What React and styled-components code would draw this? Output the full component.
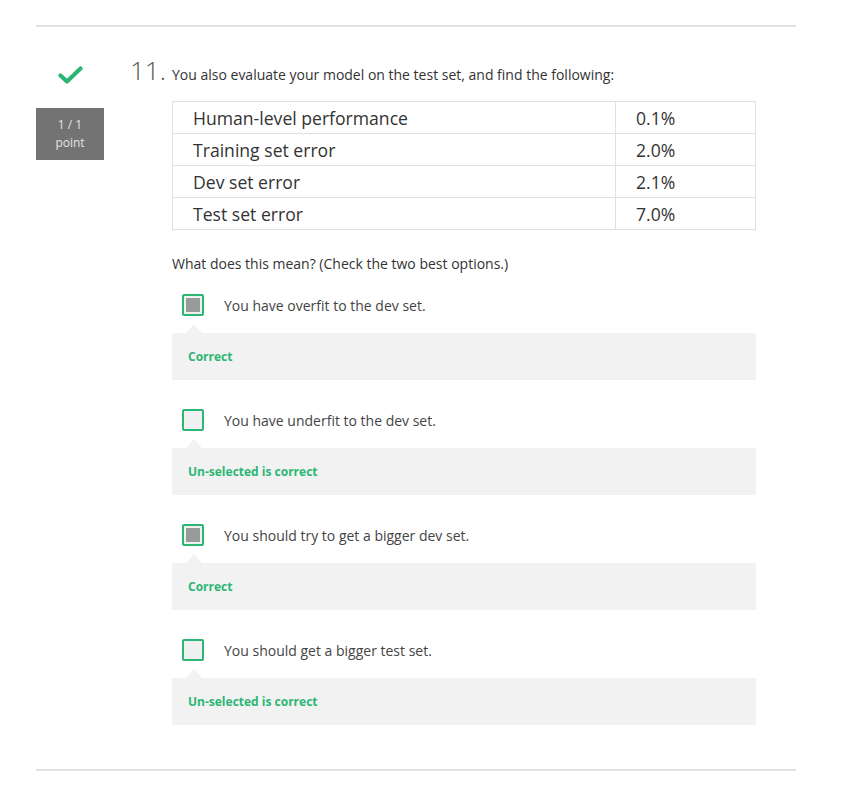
import styled, { createGlobalStyle } from "styled-components";

const GlobalStyle = createGlobalStyle`
  body {
    margin: 0;
    background: #fff;
    font-family: "Open Sans", "Liberation Sans", sans-serif;
    color: #333;
  }
`

const Page = styled.div`
  width: 760px;
  margin-left: 36px;
  padding-top: 25px;
`

const Rule = styled.hr`
  margin: 0;
  border: none;
  height: 2px;
  background: #e2e2e2;
`

const Question = styled.section`
  display: flex;
  padding: 28px 0 44px;
`

const Side = styled.div`
  width: 68px;
  display: flex;
  flex-direction: column;
  align-items: center;
`

const Check = styled.svg`
  width: 25px;
  height: 18px;
  margin-top: 11px;
  margin-bottom: 24px;
`

const PointBox = styled.div`
  width: 68px;
  height: 52px;
  background: #737373;
  color: #e4e4e4;
  font-size: 12px;
  line-height: 18px;
  text-align: center;
  padding-top: 8px;
  box-sizing: border-box;
`

const Main = styled.div`
  flex: 1;
  margin-left: 26px;
`

const Header = styled.div`
  display: flex;
  align-items: baseline;
`

const Number = styled.span`
  width: 42px;
  font-size: 26px;
  font-weight: 300;
  color: #555;
  line-height: 30px;
`

const Prompt = styled.p`
  margin: 0;
  font-size: 14px;
  color: #333;
`

const Body = styled.div`
  margin-left: 42px;
  width: 584px;
`

const Table = styled.table`
  width: 584px;
  border-collapse: collapse;
  margin-top: 16px;
`

const Cell = styled.td`
  border: 1px solid #e0e0e0;
  height: 31px;
  padding: 0 0 0 20px;
  font-size: 17.6px;
  color: #333;
  width: ${p => p.$wide ? "422px" : "auto"};
`

const Ask = styled.p`
  margin: 25px 0 0;
  font-size: 14px;
  line-height: 18px;
  color: #333;
`

const Option = styled.div`
  margin-top: ${p => p.$first ? 21 : 29}px;
`

const OptionRow = styled.div`
  display: flex;
  align-items: center;
  padding-left: 10px;
  height: 22px;
`

const Box = styled.span`
  width: 22px;
  height: 22px;
  box-sizing: border-box;
  border: 2px solid #2bb673;
  border-radius: 2px;
  background: #f0f0f0;
  display: flex;
  align-items: center;
  justify-content: center;
  margin-right: 20px;

  &::after {
    content: "";
    width: 14px;
    height: 14px;
    background: ${p => p.$checked ? "#9a9a9a" : "transparent"};
  }
`

const OptionText = styled.span`
  font-size: 14px;
  color: #444;
`

const Feedback = styled.div`
  position: relative;
  margin-top: 17px;
  height: 47px;
  background: #f2f2f2;
  padding-left: 16px;
  display: flex;
  align-items: center;
  font-size: 12px;
  font-weight: 700;
  color: #2bb673;

  &::before {
    content: "";
    position: absolute;
    left: 14px;
    top: -9px;
    border-left: 8px solid transparent;
    border-right: 8px solid transparent;
    border-bottom: 9px solid #f2f2f2;
  }
`

const rows = [
  ["Human-level performance", "0.1%"],
  ["Training set error", "2.0%"],
  ["Dev set error", "2.1%"],
  ["Test set error", "7.0%"],
]

const options = [
  { text: "You have overfit to the dev set.", checked: true, note: "Correct" },
  { text: "You have underfit to the dev set.", checked: false, note: "Un-selected is correct" },
  { text: "You should try to get a bigger dev set.", checked: true, note: "Correct" },
  { text: "You should get a bigger test set.", checked: false, note: "Un-selected is correct" },
]

export default function App() {
  return (
    <Page>
      <GlobalStyle />
      <Rule />
      <Question>
        <Side>
          <Check viewBox="0 0 25 18">
            <path d="M2.5 9.5 L9 15.5 L22.5 2.5" fill="none" stroke="#2bb673" strokeWidth="4.2" strokeLinecap="round" strokeLinejoin="round" />
          </Check>
          <PointBox>1 / 1<br />point</PointBox>
        </Side>
        <Main>
          <Header>
            <Number>11.</Number>
            <Prompt>You also evaluate your model on the test set, and find the following:</Prompt>
          </Header>
          <Body>
            <Table>
              <tbody>
                {rows.map(([label, value]) => (
                  <tr key={label}>
                    <Cell $wide>{label}</Cell>
                    <Cell>{value}</Cell>
                  </tr>
                ))}
              </tbody>
            </Table>
            <Ask>What does this mean? (Check the two best options.)</Ask>
            {options.map((o, i) => (
              <Option key={o.text} $first={i === 0}>
                <OptionRow>
                  <Box $checked={o.checked} />
                  <OptionText>{o.text}</OptionText>
                </OptionRow>
                <Feedback>{o.note}</Feedback>
              </Option>
            ))}
          </Body>
        </Main>
      </Question>
      <Rule />
    </Page>
  );
}
